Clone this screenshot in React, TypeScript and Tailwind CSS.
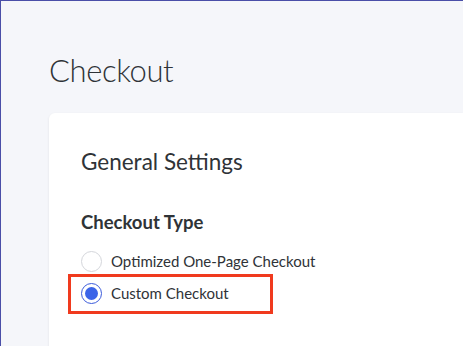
export default function App() {
    return (
        <div className="w-[463px] h-[346px] overflow-hidden bg-[#f5f6fa] border-t border-l border-[#4a4fa8] font-['Lato',sans-serif] text-[#2f3337]">
            <div className="pl-[48px] pt-[49px]">
                <h1 className="text-[31px] font-light leading-[40px] tracking-[-0.4px]">Checkout</h1>
                <div className="mt-[23px] bg-white rounded-l-[6px] shadow-[0_1px_3px_rgba(0,0,0,0.08)] pl-[32px] pt-[35px] h-[260px]">
                    <h2 className="text-[22.5px] leading-[28px]">General Settings</h2>
                    <h3 className="mt-[34px] text-[18.5px] font-bold leading-[24px]">Checkout Type</h3>
                    <div className="mt-[16px] flex items-center gap-[9px]">
                        <span className="w-[21px] h-[21px] rounded-full border border-[#d4d6db] bg-white" />
                        <span className="text-[15px]">Optimized One-Page Checkout</span>
                    </div>
                    <div className="mt-[1px] -ml-[13px] w-[205px] h-[40px] border-[3px] border-[#f03a1e] flex items-center gap-[9px] pl-[10px]">
                        <span className="w-[21px] h-[21px] rounded-full border border-[#3b5bdb] bg-white flex items-center justify-center">
                            <span className="w-[13px] h-[13px] rounded-full bg-[#3b64e8]" />
                        </span>
                        <span className="text-[15px]">Custom Checkout</span>
                    </div>
                </div>
            </div>
        </div>
    );
}
